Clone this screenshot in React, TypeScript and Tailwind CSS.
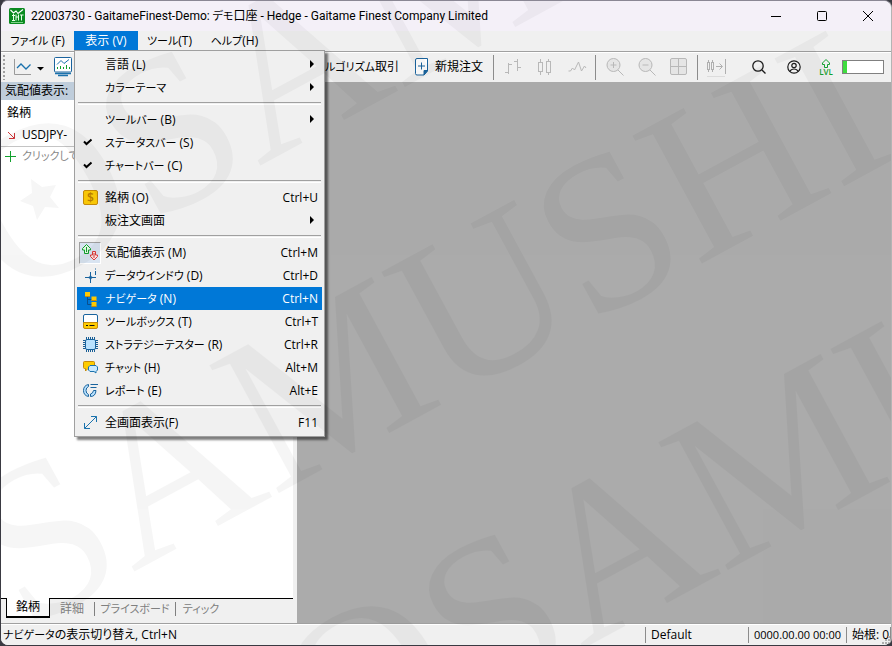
import { ReactNode } from 'react';
import clsx from 'clsx';

type MenuEntry = {
  label: string;
  shortcut?: string;
  icon?: ReactNode;
  submenu?: boolean;
  checked?: boolean;
  pressed?: boolean;
  active?: boolean;
};

// kana is set one step smaller than kanji and latin
function Label({ text }: { text: string }) {
  return (
    <>
      {text
        .split(/([ァ-ヶー]+)/)
        .filter(Boolean)
        .map((part, idx) =>
          /[ァ-ヶー]/.test(part) ? (
            <span key={idx} className="text-[11px]">
              {part}
            </span>
          ) : (
            part
          )
        )}
    </>
  );
}

function Icon({ children }: { children: ReactNode }) {
  return (
    <svg width="20" height="20" viewBox="0 0 20 20" fill="none">
      {children}
    </svg>
  );
}

const CoinIcon = (
  <Icon>
    <rect x="3.5" y="2.5" width="14" height="14" rx="1.5" fill="#f8c808" stroke="#c58a0a" />
    <text x="10.5" y="14" textAnchor="middle" fontSize="12" fontFamily="Open Sans" fontWeight="600" fill="#b97d00">
      $
    </text>
  </Icon>
);

const QuotesIcon = (
  <Icon>
    <path d="M6.500 1.500 2.500 5.500V7h2v3.500h4V7h2V5.500z" fill="#e4f6e4" stroke="#12a12e" />
    <path d="M6.500 4v5" stroke="#12a12e" />
    <path d="M12.500 8.500h3V12h2v1.500l-3.500 3.500-3.500-3.500V12h2z" fill="#fbe4e4" stroke="#dc3a3a" />
    <path d="M14 10v5" stroke="#dc3a3a" />
  </Icon>
);

const DataWindowIcon = (
  <Icon>
    <path d="M10.500 6v11M5 11.500h11" stroke="#1a649e" />
    <path d="m10.500 8.500 1 2 2 1-2 1-1 2-1-2-2-1 2-1z" fill="#1a649e" />
    <path d="M15.500 5v4M15.500 2.500v1" stroke="#1a649e" />
  </Icon>
);

const NavigatorIcon = (
  <Icon>
    <path d="M7.500 7v8.500H12M7.500 10.500H12" stroke="#0a4f8c" />
    <path d="M5 3h5v5H5zM11.500 7.500h5v4.500h-5zM11.500 13h5v4.500h-5z" fill="#ffc800" />
    <path d="M5 7.500h5M11.500 11.500h5M11.500 17.500h5" stroke="#c58a0a" />
  </Icon>
);

const ToolboxIcon = (
  <Icon>
    <path d="M3.500 11V4a1.500 1.500 0 0 1 1.500-1.500h11A1.500 1.500 0 0 1 17.500 4v7" fill="#fff" stroke="#1a649e" />
    <path d="M3.500 10.500h14V15a1.500 1.500 0 0 1-1.500 1.500H5A1.500 1.500 0 0 1 3.500 15z" fill="#ffcc00" stroke="#c58a0a" />
    <path d="M6 13.500h2M9.500 13.500h5" stroke="#111" />
  </Icon>
);

const ChipIcon = (
  <Icon>
    <path
      d="M6.500 2v15M8.500 2v15M10.500 2v15M12.500 2v15M14.500 2v15M3 5.500h15M3 7.500h15M3 9.500h15M3 11.500h15M3 13.500h15"
      stroke="#1a5e95"
    />
    <rect x="5.500" y="4.500" width="10" height="10" rx="1.500" fill="#b9e2ff" stroke="#1a649e" />
  </Icon>
);

const ChatIcon = (
  <Icon>
    <path
      d="M4.500 3.500h9a1 1 0 0 1 1 1v5a1 1 0 0 1-1 1H8L5.500 13v-2.500h-1a1 1 0 0 1-1-1v-5a1 1 0 0 1 1-1z"
      fill="#ffcc00"
      stroke="#c58a0a"
    />
    <path d="M10 7.500h6L17.500 9v3L16 13.500V15l-2-1.500h-4L8.500 12V9z" fill="#c9e9ff" stroke="#1a72ad" />
  </Icon>
);

const ReportIcon = (
  <Icon>
    <path d="M8.500 3.500q-5 1-5 6t5 6V13.500q-2.500-1-2.500-4t2.500-4z" fill="#b9e2ff" stroke="#1a649e" />
    <path d="M10.500 15.500q5 0 5.500-6h-2.500q-.5 3-3 3.500z" fill="#b9e2ff" stroke="#1a649e" />
    <path d="M10.500 3.500h7.500M10.500 6.500h6" stroke="#1a649e" />
  </Icon>
);

const FullscreenIcon = (
  <Icon>
    <path d="M4.500 15.500l12-12M11 3.500h5.500V9M4.500 10v5.500H10" stroke="#1a72ad" />
  </Icon>
);

const MENU_GROUPS: MenuEntry[][] = [
  [
    { label: '言語 (L)', submenu: true },
    { label: 'カラーテーマ', submenu: true }
  ],
  [
    { label: 'ツールバー (B)', submenu: true },
    { label: 'ステータスバー (S)', checked: true },
    { label: 'チャートバー (C)', checked: true }
  ],
  [
    { label: '銘柄 (O)', shortcut: 'Ctrl+U', icon: CoinIcon },
    { label: '板注文画面', submenu: true }
  ],
  [
    { label: '気配値表示 (M)', shortcut: 'Ctrl+M', icon: QuotesIcon, pressed: true },
    { label: 'データウインドウ (D)', shortcut: 'Ctrl+D', icon: DataWindowIcon },
    { label: 'ナビゲータ (N)', shortcut: 'Ctrl+N', icon: NavigatorIcon, active: true },
    { label: 'ツールボックス (T)', shortcut: 'Ctrl+T', icon: ToolboxIcon },
    { label: 'ストラテジーテスター (R)', shortcut: 'Ctrl+R', icon: ChipIcon },
    { label: 'チャット (H)', shortcut: 'Alt+M', icon: ChatIcon },
    { label: 'レポート (E)', shortcut: 'Alt+E', icon: ReportIcon }
  ],
  [{ label: '全画面表示(F)', shortcut: 'F11', icon: FullscreenIcon }]
];

function MenuItem({ item }: { item: MenuEntry }) {
  return (
    <button
      type="button"
      role="menuitem"
      className={clsx(
        'flex h-[23px] w-full items-center pl-0.5 pr-1 text-left',
        item.active && 'bg-[#0078d7] text-white'
      )}
    >
      <span
        className={clsx(
          'flex h-[22px] w-[22px] shrink-0 items-center justify-center',
          item.pressed && 'border border-b-white border-l-[#a0a0a0] border-r-white border-t-[#a0a0a0] bg-[#d9e4f1]'
        )}
      >
        {item.icon}
        {item.checked && (
          <svg width="20" height="20" viewBox="0 0 20 20" fill="none">
            <path d="M4 8.500l2.500 2.500 5-4.500" stroke="#000" strokeWidth="2" />
          </svg>
        )}
      </span>
      <span className="ml-1 flex-1 whitespace-nowrap">
        <Label text={item.label} />
      </span>
      {item.shortcut && <span>{item.shortcut}</span>}
      {item.submenu && (
        <svg width="10" height="10" viewBox="0 0 10 10">
          <path d="M2 0l4 4-4 4z" fill="#000" />
        </svg>
      )}
    </button>
  );
}

function ViewMenu() {
  return (
    <div
      role="menu"
      className="absolute left-0 top-full z-20 -mt-px w-[251px] border border-[#a0a0a0] bg-[#f0f0f0] p-0.5 text-black shadow-[3px_3px_2px_rgba(0,0,0,0.5)]"
    >
      {MENU_GROUPS.map((group, idx) => (
        <div key={idx}>
          {idx > 0 && <div className="mx-px my-[3px] h-[3px] border-y border-b-white border-t-[#a0a0a0]" />}
          {group.map(item => (
            <MenuItem key={item.label} item={item} />
          ))}
        </div>
      ))}
    </div>
  );
}

function TitleBar() {
  return (
    <header className="flex h-[30px] shrink-0 items-center bg-[#f4f0f8] pl-2">
      <svg width="16" height="16" viewBox="0 0 16 16" fill="none">
        <rect width="16" height="16" rx="1.500" fill="#0c8a22" />
        <path d="M1.500 2l3 3 2.500-2 2 2.500L14 1.500" stroke="#fff" strokeWidth="1.200" />
        <path d="M3 7.500h3M4.500 6v6M7 6.500v6M7 9h2.500M9.500 6.500v6M11 7h3.500M12.500 7v5.500M3 12.500h3" stroke="#e8ffe8" />
        <path d="M2 14.500h12" stroke="#7fd08a" />
      </svg>
      <h1 className="flex-1 whitespace-nowrap pl-1.5 font-['Roboto','Noto_Sans_CJK_JP',sans-serif]">
        <Label text="22003730 - GaitameFinest-Demo: デモ口座 - Hedge - Gaitame Finest Company Limited" />
      </h1>
      <button type="button" aria-label="最小化" className="flex h-full w-[46px] items-center justify-center">
        <svg width="12" height="12" viewBox="0 0 12 12" stroke="#000">
          <path d="M1 6.500h10" />
        </svg>
      </button>
      <button type="button" aria-label="最大化" className="flex h-full w-[46px] items-center justify-center">
        <svg width="12" height="12" viewBox="0 0 12 12" fill="none" stroke="#000">
          <rect x="1.500" y="1.500" width="9" height="9" rx="1" />
        </svg>
      </button>
      <button type="button" aria-label="閉じる" className="flex h-full w-[46px] items-center justify-center">
        <svg width="12" height="12" viewBox="0 0 12 12" stroke="#000">
          <path d="M1 1l10 10M11 1L1 11" />
        </svg>
      </button>
    </header>
  );
}

function MenuBar() {
  return (
    <nav className="flex h-5 shrink-0 bg-[#f0f0f0]">
      <button type="button" className="w-[73px] whitespace-nowrap">
        <Label text="ファイル (F)" />
      </button>
      <div className="relative">
        <button type="button" aria-expanded className="h-5 w-16 bg-[#0078d7] text-white">
          表示 (V)
        </button>
        <ViewMenu />
      </div>
      <button type="button" className="w-[63px] whitespace-nowrap">
        <Label text="ツール(T)" />
      </button>
      <button type="button" className="w-[67px] whitespace-nowrap">
        <Label text="ヘルプ(H)" />
      </button>
    </nav>
  );
}

function ToolButton({ label, className, children }: { label: string; className?: string; children: ReactNode }) {
  return (
    <button
      type="button"
      aria-label={label}
      className={clsx('flex h-7 w-8 shrink-0 items-center justify-center', className)}
    >
      {children}
    </button>
  );
}

function Divider() {
  return <div className="h-[25px] w-px shrink-0 bg-[#8c8c8c]" />;
}

function Toolbar() {
  return (
    <div className="flex h-[31px] shrink-0 items-center border-t border-[#a0a0a0] bg-[#f0f0f0] shadow-[inset_0_1px_0_#fff]">
      <div className="flex w-[249px] shrink-0 items-center">
        <svg width="6" height="26" viewBox="0 0 6 26">
          <path d="M3 1v25" stroke="#a0a0a0" strokeWidth="2" strokeDasharray="2 2" />
        </svg>
        <button type="button" aria-label="チャートの種類" className="ml-1.5 flex h-7 w-[34px] items-center">
          <svg width="34" height="20" viewBox="0 0 34 20" fill="none">
            <path d="M1.500 2v15.500H18" stroke="#9a9a9a" />
            <path d="M4 11l4-4 5 5 4.500-4.500" stroke="#1a72ad" strokeWidth="1.300" />
            <path d="M24 10h7l-3.500 3.500z" fill="#000" />
          </svg>
        </button>
        <button type="button" aria-label="チャート" className="ml-1.5 flex h-7 w-5 items-center">
          <svg width="20" height="20" viewBox="0 0 20 20" fill="none">
            <path d="M3 .5h14.500q1 0 1 1V14q0 1-1 1H2.500q-1 0-1-1V1.500q0-1 1-1z" fill="#fff" stroke="#1a649e" />
            <path d="M2 16.500h16M5 18.500h10" stroke="#1a72ad" strokeWidth="1.500" />
            <path d="M4 7.500l4-4 3 3 5-4" stroke="#1a72ad" />
            <path d="M4.500 10v2M7.500 9v3M10.500 10v2M13.500 8v4M16.500 10v2" stroke="#12a12e" />
          </svg>
        </button>
      </div>
      <button type="button" className="w-[149px] shrink-0 whitespace-nowrap text-right">
        <Label text="アルゴリズム取引" />
      </button>
      <button type="button" className="ml-4 flex w-[78px] shrink-0 items-center gap-1.5 whitespace-nowrap">
        <svg width="14" height="18" viewBox="0 0 14 18" fill="none">
          <path d="M2 .5h10.500V13L9 17H2q-1.500 0-1.500-1.500V2Q.5.5 2 .5z" fill="#fff" stroke="#1a649e" />
          <path d="M12.500 12.500H9V17z" fill="#1a649e" stroke="#1a649e" />
          <path d="M6.500 4.500v7M3 8h7" stroke="#1a649e" />
        </svg>
        新規注文
      </button>
      <Divider />
      <div className="flex w-[101px] shrink-0 justify-center">
        <ToolButton label="バーチャート">
          <svg width="20" height="20" viewBox="0 0 20 20" fill="none" stroke="#b8b8b8">
            <path d="M5.500 6v11M2 15.500h3M6 7.500h3M14.500 2v12M11 4.500h3M15 10.500h3" />
          </svg>
        </ToolButton>
        <ToolButton label="ローソク足">
          <svg width="20" height="20" viewBox="0 0 20 20" fill="none" stroke="#b8b8b8">
            <path d="M5.500 2v3M5.500 15v3M13.500 2v2M13.500 16v2" />
            <rect x="3.500" y="5.500" width="4" height="9" />
            <rect x="11.500" y="4.500" width="4" height="11" />
          </svg>
        </ToolButton>
        <ToolButton label="ラインチャート">
          <svg width="20" height="20" viewBox="0 0 20 20" fill="none" stroke="#b8b8b8">
            <path d="M1.500 14h2l2-3 2 2 4-8 3 9 3-5 1.500 2" />
          </svg>
        </ToolButton>
      </div>
      <Divider />
      <div className="flex w-[101px] shrink-0 justify-center">
        <ToolButton label="ズームイン">
          <svg width="20" height="20" viewBox="0 0 20 20" fill="none" stroke="#b8b8b8">
            <circle cx="8.500" cy="8" r="6.500" fill="#e6e6e6" />
            <path d="M13 13l5.500 5.500M8.500 5v6M5.500 8h6" />
          </svg>
        </ToolButton>
        <ToolButton label="ズームアウト">
          <svg width="20" height="20" viewBox="0 0 20 20" fill="none" stroke="#b8b8b8">
            <circle cx="8.500" cy="8" r="6.500" fill="#e6e6e6" />
            <path d="M13 13l5.500 5.500M5.500 8h6" />
          </svg>
        </ToolButton>
        <ToolButton label="整列">
          <svg width="20" height="20" viewBox="0 0 20 20" fill="none" stroke="#b8b8b8">
            <rect x="1.500" y="1.500" width="16" height="16" rx="1.500" fill="#e6e6e6" />
            <path d="M9.500 2v15M2 9.500h15" />
          </svg>
        </ToolButton>
      </div>
      <Divider />
      <ToolButton label="チャートシフト" className="ml-0.5">
        <svg width="20" height="20" viewBox="0 0 20 20" fill="none" stroke="#b0b0b0">
          <path d="M2.500 3v2M2.500 13v2M6.500 3v2M6.500 13v2M19.500 2v15M10 9.500h6M13.500 6.500l3 3-3 3" />
          <rect x="1.500" y="5.500" width="2" height="7" />
          <rect x="5.500" y="5.500" width="2" height="7" />
          <path d="M1 19.500h18" stroke="#dcdcdc" />
        </svg>
      </ToolButton>
      <div className="ml-auto flex shrink-0 items-center pr-[7px]">
        <ToolButton label="検索">
          <svg width="16" height="16" viewBox="0 0 16 16" fill="none" stroke="#1c1c1c" strokeWidth="1.300">
            <circle cx="7" cy="7" r="5.200" />
            <path d="M11 11l3.500 3.500" />
          </svg>
        </ToolButton>
        <ToolButton label="アカウント" className="ml-[3px]">
          <svg width="14" height="14" viewBox="0 0 14 14" fill="none" stroke="#1c1c1c" strokeWidth="1.200">
            <circle cx="7" cy="7" r="6.200" />
            <circle cx="7" cy="5.500" r="2.200" />
            <path d="M3 11.500q1-2.500 4-2.500t4 2.500" />
          </svg>
        </ToolButton>
        <ToolButton label="LVL">
          <svg width="16" height="18" viewBox="0 0 16 18" fill="none">
            <path d="M8 1.500L4.500 5v1.500h2V9.500h3V6.500h2V5z" stroke="#12a12e" />
            <text x="8" y="17" textAnchor="middle" fontSize="8" fontFamily="Open Sans" fontWeight="600" fill="#12a12e">
              LVL
            </text>
          </svg>
        </ToolButton>
        <div className="h-[14px] w-[42px] border border-[#808080] bg-white">
          <div className="h-full w-1 bg-[#3fdc3f]" />
        </div>
      </div>
    </div>
  );
}

function MarketWatch() {
  return (
    <section className="mr-1 flex w-[292px] shrink-0 flex-col bg-white">
      <h2 className="h-[18px] shrink-0 bg-[#bfcddb] pl-1 leading-[18px]">気配値表示:</h2>
      <table className="w-full text-left">
        <thead>
          <tr>
            <th className="h-[25px] pl-1.5 font-normal">銘柄</th>
          </tr>
        </thead>
        <tbody>
          <tr className="border-b border-[#c4c4c4]">
            <td className="h-[21px] pl-1.5">
              <span className="flex items-center gap-1.5">
                <svg width="9" height="9" viewBox="0 0 9 9" fill="none" stroke="#d13438">
                  <path d="M1 1l6.500 6.500M7.500 2v5.500H2" />
                </svg>
                USDJPY-
              </span>
            </td>
          </tr>
          <tr>
            <td className="h-5 pl-1 text-[11px] text-[#8a8a8a]">
              <span className="flex items-center gap-1.5">
                <svg width="11" height="11" viewBox="0 0 11 11" stroke="#12a12e">
                  <path d="M5.500 0v11M0 5.500h11" />
                </svg>
                クリックして
              </span>
            </td>
          </tr>
        </tbody>
      </table>
      <div role="tablist" className="mt-auto flex h-[25px] shrink-0 bg-[#f0f0f0] text-[#808080]">
        <div className="w-[5px] border-t border-black" />
        <button
          type="button"
          role="tab"
          aria-selected
          className="h-5 w-11 border-x border-b-2 border-black bg-white text-black"
        >
          銘柄
        </button>
        <div className="flex h-5 flex-1 items-center border-t border-black">
          <button type="button" role="tab" className="w-11">
            詳細
          </button>
          <div className="h-[14px] w-px bg-[#808080]" />
          <button type="button" role="tab" className="w-20 whitespace-nowrap">
            <Label text="プライスボード" />
          </button>
          <div className="h-[14px] w-px bg-[#808080]" />
          <button type="button" role="tab" className="w-[50px] whitespace-nowrap">
            <Label text="ティック" />
          </button>
        </div>
      </div>
    </section>
  );
}

function StatusBar() {
  return (
    <footer className="relative flex h-[22px] shrink-0 items-center whitespace-nowrap border-t border-[#a0a0a0] bg-[#f0f0f0] shadow-[inset_0_1px_0_#fff]">
      <p className="flex-1 pl-0.5">
        <Label text="ナビゲータの表示切り替え, Ctrl+N" />
      </p>
      <p className="w-[103px] border-l border-[#8c8c8c] pl-[5px]">Default</p>
      <p className="w-[98px] border-l border-[#8c8c8c] pl-[5px] text-[11px] leading-4">0000.00.00 00:00</p>
      <p className="w-[45px] overflow-hidden border-x border-[#8c8c8c] pl-[5px]">始根: 0</p>
      <svg className="absolute bottom-0 right-0" width="10" height="10" viewBox="0 0 10 10" fill="#b0b0b0">
        <path d="M7 1h2v2H7zM4 4h2v2H4zM7 4h2v2H7zM1 7h2v2H1zM4 7h2v2H4zM7 7h2v2H7z" />
      </svg>
    </footer>
  );
}

function Star({ className }: { className: string }) {
  return (
    <svg className={clsx('absolute', className)} width="44" height="44" viewBox="0 0 44 44">
      <path d="M12 1l11 8 14-2-6 12 9 11-14-1-8 13-4-14L1 23l12-8z" />
    </svg>
  );
}

function Watermark() {
  // rows turn around the start of their baseline
  const row = 'absolute origin-[0_186px] rotate-[-28.5deg] whitespace-nowrap';
  return (
    <div
      aria-hidden
      className="pointer-events-none absolute inset-0 z-30 overflow-hidden font-['Liberation_Serif',serif] text-[222px] leading-none opacity-[0.035]"
    >
      <span className={clsx(row, 'left-2 top-[115px]')}>OSAMUSHI</span>
      <span className={clsx(row, 'left-[-118px] top-[521px]')}>OSAMUSHI</span>
      <span className={clsx(row, 'left-[331px] top-[598px]')}>OSAMUSHI</span>
      <Star className="left-[18px] top-[177px]" />
      <Star className="left-[341px] top-[660px]" />
    </div>
  );
}

export default function App() {
  return (
    <div className="h-screen overflow-hidden bg-[#3a3a42] font-['Open_Sans','Noto_Sans_CJK_JP',sans-serif] text-xs text-black [font-feature-settings:'palt']">
      <div className="relative flex h-full flex-col overflow-hidden rounded-lg border border-b-[#3a3a42] border-l-[#3a3a42] border-r-[#b4b4b4] border-t-[#8a8794] bg-[#f0f0f0]">
        <TitleBar />
        <MenuBar />
        <Toolbar />
        <main className="flex min-h-0 flex-1">
          <MarketWatch />
          <div className="flex-1 bg-[#ababab]" />
        </main>
        <StatusBar />
        <Watermark />
      </div>
    </div>
  );
}
